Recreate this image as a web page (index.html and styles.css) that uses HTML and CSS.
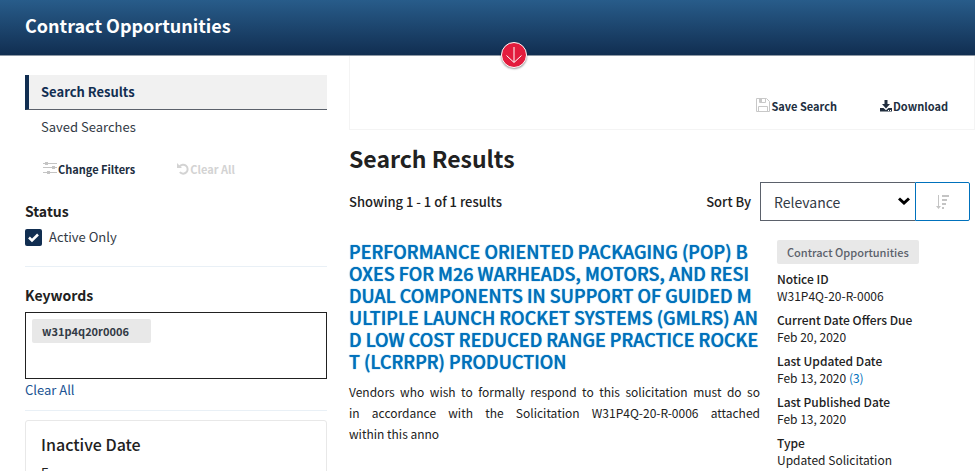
FILE: index.html
```
<!DOCTYPE html>
<html lang="en">

<head>
    <meta charset="UTF-8">
    <meta name="viewport" content="width=device-width, initial-scale=1.0">
    <title>Contract Opportunities</title>
    <link rel="stylesheet" href="styles.css">
</head>

<body>
    <header class="banner">
        <h1>Contract Opportunities</h1>
        <button class="toggle" type="button" aria-label="Expand search">
            <svg viewBox="0 0 26 26" width="26" height="26" fill="none" stroke="#fff" stroke-width="1">
                <path d="M13 5v15M5.500 13.500l7.500 7 7.500-7" />
            </svg>
        </button>
    </header>
    <div class="page">
        <aside class="sidebar">
            <nav class="side-nav">
                <a class="active" href="#results">Search Results</a>
                <a href="#saved">Saved Searches</a>
            </nav>
            <div class="filter-actions">
                <button class="action" type="button">
                    <svg class="icon-lg" viewBox="0 0 14 14" width="14" height="14" fill="#c4c4c4">
                        <path d="M0 2h14v1H0zM0 6h14v1H0zM0 11h14v1H0z" />
                        <path d="M2 1h3v3H2zM9 5h3v3H9zM4 10h3v3H4z" />
                    </svg>
                    Change Filters
                </button>
                <button class="action" type="button" disabled>
                    <svg viewBox="0 0 12 12" width="12" height="12" fill="none" stroke="#d3d3d3" stroke-width="2">
                        <path d="M2.500 3.500A4.500 4.500 0 1 1 2.800 9.200" />
                        <path d="M0 0v5h5z" fill="#d3d3d3" stroke="none" />
                    </svg>
                    Clear All
                </button>
            </div>
            <h2 class="filter-title">Status</h2>
            <label class="check">
                <input type="checkbox" checked>
                Active Only
            </label>
            <hr>
            <h2 class="filter-title" id="keywords">Keywords</h2>
            <div class="keyword-box" role="group" aria-labelledby="keywords">
                <span class="tag">w31p4q20r0006</span>
            </div>
            <a class="clear-link" href="#clear">Clear All</a>
            <hr class="tight">
            <section class="card">
                <h3>Inactive Date</h3>
                <label for="from">From</label>
                <input type="text" id="from">
            </section>
        </aside>
        <main class="content">
            <div class="toolbar">
                <button class="action" type="button">
                    <svg class="icon-lg" viewBox="0 0 14 14" width="14" height="14" fill="none" stroke="#c8c8c8">
                        <path d="M.5.5h10l3 3v10H.5zM2.500 13.500v-5h9v5" />
                        <path d="M3.500.5v4h6v-4" />
                        <path d="M3 1h3v3H3z" fill="#c8c8c8" stroke="none" />
                    </svg>
                    Save Search
                </button>
                <button class="action" type="button">
                    <svg viewBox="0 0 12 12" width="12" height="12" fill="#212e3f">
                        <path d="M4.500 0h3v4H10L6 8.500 2 4h2.500z" />
                        <path d="M0 8h3.500L6 10.200 8.500 8H12v3.500H0z" />
                        <path d="M8 10h1v1H8zM10 10h1v1h-1z" fill="#fff" />
                    </svg>
                    Download
                </button>
            </div>
            <h2 class="results-title">Search Results</h2>
            <div class="results-bar">
                <span>Showing 1 - 1 of 1 results</span>
                <div class="sort">
                    <label for="sort">Sort By</label>
                    <div class="select-wrap">
                        <select id="sort">
                            <option>Relevance</option>
                            <option>Updated Date</option>
                        </select>
                        <svg class="chevron" viewBox="0 0 12 8" width="12" height="8" fill="none" stroke="#000" stroke-width="3">
                            <path d="M1 1.500l5 4.500 5-4.500" />
                        </svg>
                    </div>
                    <button class="order" type="button" aria-label="Sort descending">
                        <svg viewBox="0 0 13 14" width="13" height="14" fill="#c4c4c4">
                            <path d="M2 0h1v11h2L2.500 14 0 11h2z" />
                            <path d="M6 0h7v2H6zM6 4h5v2H6zM6 8h4v2H6zM6 12h2v2H6z" />
                        </svg>
                    </button>
                </div>
            </div>
            <article class="result">
                <div class="summary">
                    <h3><a href="#notice">PERFORMANCE ORIENTED PACKAGING (POP) BOXES FOR M26 WARHEADS, MOTORS, AND RESIDUAL COMPONENTS IN SUPPORT OF GUIDED MULTIPLE LAUNCH ROCKET SYSTEMS (GMLRS) AND LOW COST REDUCED RANGE PRACTICE ROCKET (LCRRPR) PRODUCTION</a></h3>
                    <p>Vendors who wish to formally respond to this solicitation must do so<br>in accordance with the Solicitation W31P4Q-20-R-0006 attached<br><span class="last">within this anno</span></p>
                </div>
                <div class="meta">
                    <span class="badge">Contract Opportunities</span>
                    <dl>
                        <dt>Notice ID</dt>
                        <dd>W31P4Q-20-R-0006</dd>
                        <dt>Current Date Offers Due</dt>
                        <dd>Feb 20, 2020</dd>
                        <dt>Last Updated Date</dt>
                        <dd>Feb 13, 2020 <a href="#history">(3)</a></dd>
                        <dt>Last Published Date</dt>
                        <dd>Feb 13, 2020</dd>
                        <dt>Type</dt>
                        <dd>Updated Solicitation</dd>
                    </dl>
                </div>
            </article>
        </main>
    </div>
</body>

</html>
```
FILE: styles.css
```
* {
    box-sizing: border-box;
}

body {
    margin: 0;
    font-family: "Noto Sans CJK SC", "Noto Sans", sans-serif;
    font-size: 13px;
    line-height: 20px;
    color: #212121;
    background: #fff;
}

h1, h2, h3, p, dl, dd {
    margin: 0;
}

a {
    color: #0071bc;
    text-decoration: none;
}

button, select, input {
    font: inherit;
}

button {
    padding: 0;
    background: none;
    border: none;
    cursor: pointer;
}

.banner {
    position: relative;
    padding: 11px 25px 16px;
    background: linear-gradient(#285c8a, #112e51);
    border-bottom: 1px solid #8d98a5;
}

.banner h1 {
    font-size: 18px;
    font-weight: 700;
    line-height: 28px;
    color: #fff;
}

/* sits on the bottom edge of the banner */
.toggle {
    position: absolute;
    left: 501px;
    bottom: -13px;
    width: 26px;
    height: 26px;
    background: #e31c3d;
    border: 1px solid #fff;
    border-radius: 50%;
    box-shadow: 0 1px 2px rgba(0, 0, 0, 0.4);
}

.toggle svg {
    display: block;
    margin: -1px;
}

.page {
    display: grid;
    grid-template-columns: minmax(0, 302fr) minmax(0, 626fr);
    gap: 22px;
    padding-left: 25px;
}

.sidebar {
    padding-top: 19px;
}

.side-nav a {
    display: block;
    padding: 7px 16px;
    color: #323a45;
}

.side-nav .active {
    padding-left: 12px;
    font-weight: 700;
    color: #112e51;
    background: #f1f1f1;
    border-left: 4px solid #112e51;
    border-bottom: 1px solid #5b616b;
}

.filter-actions {
    display: flex;
    gap: 42px;
    padding: 15px 18px 0;
}

.action {
    display: flex;
    align-items: center;
    gap: 1px;
    font-size: 11px;
    font-weight: 700;
    color: #212e3f;
}

.action:disabled {
    color: #d3d3d3;
}

.icon-lg {
    margin-bottom: 3px;
}

.filter-title {
    margin-top: 22px;
    font-size: 14px;
    font-weight: 700;
}

.check {
    display: flex;
    align-items: center;
    gap: 7px;
    margin-top: 6px;
    color: #323a45;
}

.check input {
    appearance: none;
    width: 17px;
    height: 17px;
    margin: 0;
    border-radius: 2px;
    background: #112e51 url("data:image/svg+xml,%3Csvg xmlns='http://www.w3.org/2000/svg' viewBox='0 0 17 17'%3E%3Cpath d='M4 8.500l3 3L13 5.500' fill='none' stroke='%23fff' stroke-width='2.500'/%3E%3C/svg%3E");
}

hr {
    margin: 19px 0 0;
    border: none;
    border-top: 1px solid #e9f0f6;
}

hr.tight {
    margin-top: 10px;
}

hr + .filter-title {
    margin-top: 18px;
}

.keyword-box {
    height: 67px;
    margin-top: 7px;
    padding: 6px;
    border: 1px solid #212121;
}

.tag {
    display: block;
    width: 119px;
    padding: 2px 10px;
    font-size: 11px;
    font-weight: 700;
    color: #323a45;
    background: #e8e8e8;
    border-radius: 2px;
}

.clear-link {
    display: block;
    margin-top: 1px;
    color: #205493;
}

.card {
    margin-top: 9px;
    padding: 13px 15px;
    border: 1px solid #e8e8e8;
    border-radius: 3px;
}

.card h3 {
    margin-bottom: 9px;
    font-size: 16px;
    font-weight: 500;
}

.card label {
    display: block;
}

.card input {
    width: 100%;
    height: 38px;
    border: 1px solid #5b616b;
}

.toolbar {
    display: flex;
    justify-content: flex-end;
    gap: 43px;
    padding: 40px 26px 13px;
    border: 1px solid #f4f4f4;
    border-top: none;
}

.results-title {
    margin-top: 13px;
    font-size: 23px;
    font-weight: 700;
    line-height: 30px;
}

.results-bar {
    display: flex;
    align-items: center;
    justify-content: space-between;
    margin-top: 9px;
    padding-right: 5px;
    font-weight: 500;
}

.sort {
    display: flex;
    align-items: center;
}

.select-wrap {
    position: relative;
    margin-left: 9px;
}

.sort select {
    appearance: none;
    display: block;
    width: 155px;
    height: 39px;
    padding: 0 13px;
    font-size: 14px;
    font-weight: 400;
    color: #323a45;
    background: #fff;
    border: 1px solid #5b616b;
    border-right: none;
    border-radius: 0;
}

.chevron {
    position: absolute;
    top: 15px;
    right: 5px;
    pointer-events: none;
}

.order {
    display: flex;
    align-items: center;
    justify-content: center;
    width: 55px;
    height: 39px;
    border: 1px solid #0071bc;
    border-radius: 0 2px 2px 0;
}

.result {
    display: grid;
    grid-template-columns: minmax(0, 411fr) minmax(0, 193fr);
    gap: 17px;
    margin-top: 19px;
    padding-right: 5px;
}

.summary h3 {
    font-size: 18px;
    font-weight: 500;
    line-height: 22px;
    word-break: break-all;
}

/* a little extra weight without widening the lines */
.summary h3 a {
    text-shadow: 0 0 1px #0071bc;
}

.summary p {
    margin-top: 9px;
    font-size: 12px;
    line-height: 21px;
    text-align: justify;
    text-align-last: justify;
}

.last {
    display: block;
    text-align-last: left;
}

.badge {
    display: inline-block;
    padding: 2px 10px;
    font-size: 11px;
    font-weight: 500;
    color: #5b616b;
    background: #e8e8e8;
    border-radius: 2px;
}

.meta dl {
    margin-top: 6px;
    font-size: 12px;
    line-height: 17px;
}

.meta dt {
    font-weight: 500;
}

.meta dd {
    margin-bottom: 7px;
}
```
